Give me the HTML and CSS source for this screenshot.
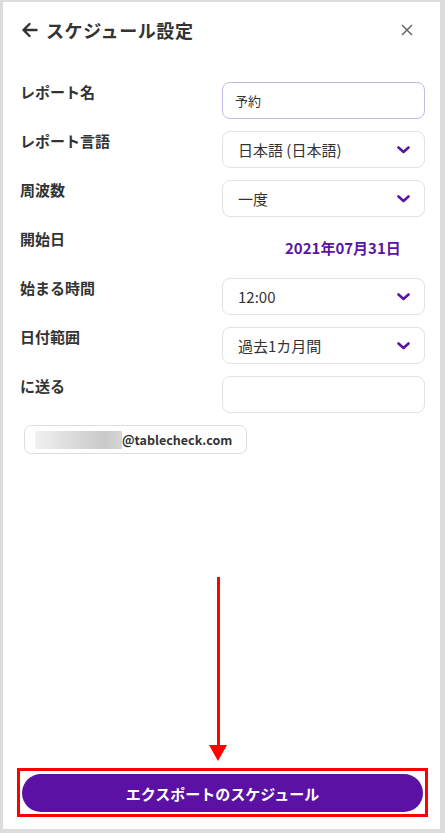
FILE: index.html
```html
<!DOCTYPE html>
<html>
<head>
 <meta charset="UTF-8">
 <title>スケジュール設定</title>
 <link rel="stylesheet" href="styles.css">
</head>
<body>
<div class="frame">
  <div class="header">
    <svg class="back" width="17" height="16" viewBox="0 0 17 16">
      <path d="M15.5 8H2.5M8.5 2L2.5 8L8.5 14" fill="none" stroke="#333" stroke-width="2.4" stroke-linecap="round" stroke-linejoin="round"/>
    </svg>
    <span class="title">スケジュール設定</span>
    <svg class="close" width="12" height="12" viewBox="0 0 12 12">
      <path d="M1 1L11 11M11 1L1 11" stroke="#666" stroke-width="1.5"/>
    </svg>
  </div>

  <div class="form">
    <div class="label">レポート名</div>
    <div class="field field-active">予約</div>

    <div class="label">レポート言語</div>
    <div class="field select">日本語 (日本語)
      <svg class="chev" width="13" height="8" viewBox="0 0 13 8"><path d="M1.5 1.5L6.5 6L11.5 1.5" fill="none" stroke="#5b15a3" stroke-width="2.6" stroke-linecap="round" stroke-linejoin="round"/></svg>
    </div>

    <div class="label">周波数</div>
    <div class="field select">一度
      <svg class="chev" width="13" height="8" viewBox="0 0 13 8"><path d="M1.5 1.5L6.5 6L11.5 1.5" fill="none" stroke="#5b15a3" stroke-width="2.6" stroke-linecap="round" stroke-linejoin="round"/></svg>
    </div>

    <div class="label">開始日</div>
    <div class="date">2021年07月31日</div>

    <div class="label">始まる時間</div>
    <div class="field select">12:00
      <svg class="chev" width="13" height="8" viewBox="0 0 13 8"><path d="M1.5 1.5L6.5 6L11.5 1.5" fill="none" stroke="#5b15a3" stroke-width="2.6" stroke-linecap="round" stroke-linejoin="round"/></svg>
    </div>

    <div class="label">日付範囲</div>
    <div class="field select">過去1カ月間
      <svg class="chev" width="13" height="8" viewBox="0 0 13 8"><path d="M1.5 1.5L6.5 6L11.5 1.5" fill="none" stroke="#5b15a3" stroke-width="2.6" stroke-linecap="round" stroke-linejoin="round"/></svg>
    </div>

    <div class="label">に送る</div>
    <div class="field"></div>
  </div>

  <div class="chip"><span class="blur"></span>@tablecheck.com</div>

  <div class="spacer"></div>

  <div class="footer">
    <button class="btn">エクスポートのスケジュール</button>
  </div>

  <div class="arrow">
    <div class="arrow-line"></div>
    <div class="arrow-head"></div>
  </div>
</div>
</body>
</html>
```

FILE: styles.css
```css
html, body {
  margin: 0;
  padding: 0;
}
body {
  width: 445px;
  height: 833px;
  font-family: "Noto Sans CJK JP", "Noto Sans", sans-serif;
  color: #333;
  background: #fff;
}
.frame {
  position: relative;
  box-sizing: border-box;
  width: 445px;
  height: 833px;
  border-style: solid;
  border-color: #dcdcdc;
  border-width: 2px 5px 4px 3px;
  display: flex;
  flex-direction: column;
}
.header {
  height: 56px;
  display: flex;
  align-items: center;
  padding: 0 27px 0 18px;
}
.back {
  margin-right: 8px;
}
.title {
  font-size: 18px;
  font-weight: bold;
  letter-spacing: 0.6px;
  flex: 1;
}
.form {
  display: grid;
  grid-template-columns: 202px 203px;
  row-gap: 12px;
  padding: 24px 0 0 17px;
}
.label {
  font-size: 15px;
  font-weight: bold;
  line-height: 20px;
}
.field {
  box-sizing: border-box;
  height: 37px;
  border: 1px solid #e2e2e2;
  border-radius: 8px;
  display: flex;
  align-items: center;
  padding: 0 14px 0 15px;
  font-size: 15px;
  color: #333;
}
.field-active {
  border-color: #c8b6e8;
  font-size: 13px;
  padding-left: 12px;
}
.select {
  justify-content: space-between;
}
.date {
  height: 37px;
  display: flex;
  align-items: center;
  padding-left: 63px;
  font-size: 15px;
  font-weight: bold;
  color: #5b15a3;
}
.chip {
  box-sizing: border-box;
  width: 223px;
  height: 29px;
  margin: 12px 0 0 21px;
  border: 1px solid #dedede;
  border-radius: 7px;
  display: flex;
  align-items: center;
  padding-left: 10px;
  font-size: 12.5px;
  font-weight: bold;
  color: #333;
}
.blur {
  display: inline-block;
  width: 87px;
  height: 18px;
  background: linear-gradient(90deg, #f1f1f1 0%, #dadada 45%, #c9c9c9 80%, #d6d6d6 100%);
}
.spacer {
  flex: 1;
}
.footer {
  margin: 0 12px 12px 14px;
  border: 3px solid #f00;
  padding: 3px 2px 2px 2px;
}
.btn {
  display: block;
  width: 100%;
  height: 38px;
  border: none;
  border-radius: 19px;
  background: #5b12a4;
  color: #fff;
  font-family: "Noto Sans CJK JP", sans-serif;
  font-size: 15px;
  font-weight: bold;
}
.arrow {
  position: absolute;
  left: 206px;
  top: 575px;
  width: 18px;
  display: flex;
  flex-direction: column;
  align-items: center;
}
.arrow-line {
  width: 3px;
  height: 168px;
  background: #f00;
}
.arrow-head {
  width: 0;
  height: 0;
  border-left: 9px solid transparent;
  border-right: 9px solid transparent;
  border-top: 16px solid #f00;
}
```
